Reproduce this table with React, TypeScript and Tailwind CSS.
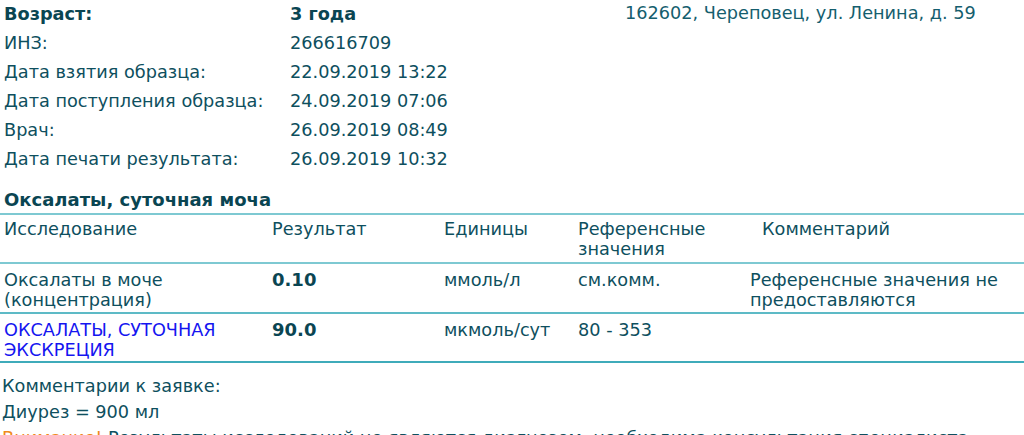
import React from "react";

const font = { fontFamily: '"DejaVu Sans", Verdana, sans-serif' };

export default function App() {
  const rows: [string, string, boolean][] = [
    ["Возраст:", "3 года", true],
    ["ИНЗ:", "266616709", false],
    ["Дата взятия образца:", "22.09.2019 13:22", false],
    ["Дата поступления образца:", "24.09.2019 07:06", false],
    ["Врач:", "26.09.2019 08:49", false],
    ["Дата печати результата:", "26.09.2019 10:32", false],
  ];
  return (
    <div className="w-[1024px] h-[435px] overflow-hidden bg-white text-[#0e4f5e] text-[17.7px]" style={font}>
      <div className="relative">
        <div className="absolute left-[625px] top-[0px] leading-[26px] text-[#155e6e]">162602, Череповец, ул. Ленина, д. 59</div>
        <div className="flex flex-col">
          {rows.map(([a, b, bold]) => (
            <div key={a} className={`flex h-[29px] items-center ${bold ? "font-bold text-[#0a4552]" : ""}`}>
              <div className="w-[290px] pl-[4px]">{a}</div>
              <div>{b}</div>
            </div>
          ))}
        </div>
      </div>
      <div className="mt-[16px] pl-[4px] font-bold text-[18px] text-[#0a4552] leading-[20px]">Оксалаты, суточная моча</div>
      <div className="mt-[3px] border-t-2 border-[#7ec9d2] leading-[20px]">
        <div className="flex h-[49px] pt-[4px] border-b-2 border-[#7ec9d2]">
          <div className="w-[272px] pl-[4px]">Исследование</div>
          <div className="w-[172px]">Результат</div>
          <div className="w-[134px]">Единицы</div>
          <div className="w-[184px]">Референсные<br />значения</div>
          <div className="flex-1">Комментарий</div>
        </div>
        <div className="flex h-[50px] pt-[6px] border-b-2 border-[#5dbac6]">
          <div className="w-[272px] pl-[4px]">Оксалаты в моче<br />(концентрация)</div>
          <div className="w-[172px] font-bold text-[18px] text-[#0a4552]">0.10</div>
          <div className="w-[134px]">ммоль/л</div>
          <div className="w-[172px]">см.комм.</div>
          <div className="flex-1">Референсные значения не<br />предоставляются</div>
        </div>
        <div className="flex h-[49px] pt-[6px] border-b-2 border-[#3fabba]">
          <div className="w-[272px] pl-[4px] text-[#1515f0]">ОКСАЛАТЫ, СУТОЧНАЯ<br />ЭКСКРЕЦИЯ</div>
          <div className="w-[172px] font-bold text-[18px] text-[#0a4552]">90.0</div>
          <div className="w-[134px]">мкмоль/сут</div>
          <div className="w-[172px]">80 - 353</div>
          <div className="flex-1"></div>
        </div>
      </div>
      <div className="pl-[2px] pt-[10px] leading-[26px]">
        <div>Комментарии к заявке:</div>
        <div>Диурез = 900 мл</div>
        <div className="whitespace-nowrap">
          <span className="text-[#f08a1c]">Внимание! </span>
          <span>Результаты исследований не являются диагнозом, необходима консультация специалиста</span>
        </div>
      </div>
    </div>
  );
}
